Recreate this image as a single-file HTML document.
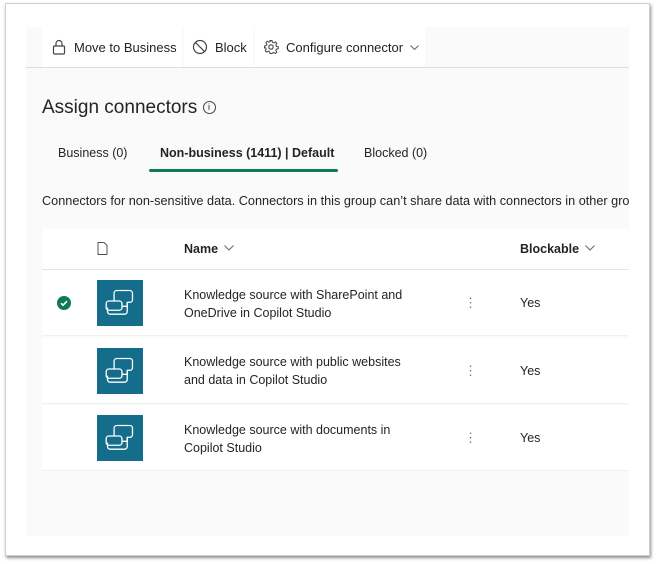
<!DOCTYPE html>
<html><head><meta charset="utf-8"><style>
*{margin:0;padding:0;box-sizing:border-box}
body{width:656px;height:564px;background:#fff;font-family:"Liberation Sans",sans-serif;color:#242424;position:relative;overflow:hidden}
.frame{position:absolute;left:5px;top:3px;width:645px;height:553px;border:1px solid #cfcfcf;box-shadow:1px 2px 3px rgba(0,0,0,.45);background:#fff}
.panel{position:absolute;left:26px;top:27px;width:603px;height:509px;background:#fafafa;overflow:hidden}
.a{position:absolute;white-space:nowrap}
.tb{position:absolute;top:0;height:40px;background:#fff;display:flex;align-items:center;font-size:13px}
.row{position:absolute;left:16px;width:587px;height:66px;background:#fff;border-bottom:1px solid #f0f0f0}
.ic{position:absolute;width:46px;height:46px;background:#136d8b}
.t{position:absolute;font-size:12.5px;line-height:18px}
.dots{position:absolute;font-size:13px;color:#777}
.yes{position:absolute;font-size:12.5px}
.chev{display:inline-block;vertical-align:2px;margin-left:4px}
</style></head><body>
<div class="frame"></div>
<div class="panel">
 <div class="a" style="left:0;top:40px;width:603px;height:1px;background:#ddd"></div>
 <div class="tb" style="left:16px;width:140px;padding-left:10px">
  <svg width="14" height="16" viewBox="0 0 14 16" style="margin-right:8px"><rect x="1.5" y="7" width="11" height="8" rx="1" fill="none" stroke="#444" stroke-width="1.2"/><path d="M4 7V4.5a3 3 0 0 1 6 0V7" fill="none" stroke="#444" stroke-width="1.2"/></svg>Move to Business</div>
 <div class="tb" style="left:158px;width:69px;padding-left:8px">
  <svg width="16" height="16" viewBox="0 0 16 16" style="margin-right:7px"><circle cx="8" cy="8" r="6.5" fill="none" stroke="#444" stroke-width="1.2"/><path d="M3.4 3.4l9.2 9.2" stroke="#444" stroke-width="1.2"/></svg>Block</div>
 <div class="tb" style="left:229px;width:170px;padding-left:8px">
  <svg width="16" height="16" viewBox="0 0 16 16" style="margin-right:7px"><circle cx="8" cy="8" r="2.2" fill="none" stroke="#444" stroke-width="1.1"/><path d="M7 1.5h2l.4 1.8 1.4.6 1.6-1 1.4 1.4-1 1.6.6 1.4 1.8.4v2l-1.8.4-.6 1.4 1 1.6-1.4 1.4-1.6-1-1.4.6L9 14.5H7l-.4-1.8-1.4-.6-1.6 1-1.4-1.4 1-1.6-.6-1.4L1.5 9V7l1.8-.4.6-1.4-1-1.6 1.4-1.4 1.6 1 1.4-.6z" fill="none" stroke="#444" stroke-width="1"/></svg>Configure connector<svg class="chev" style="margin-left:7px;vertical-align:1px" width="9" height="5" viewBox="0 0 9 5"><path d="M.5.5l4 4 4-4" fill="none" stroke="#666"/></svg></div>
 <div class="a" style="left:16px;top:70px;font-size:19px;color:#242424">Assign connectors <span style="display:inline-block;width:13px;height:13px;border:1px solid #444;border-radius:50%;font-size:9px;text-align:center;line-height:11px;vertical-align:3px">i</span></div>
 <div class="a" style="left:32px;top:119px;font-size:12.5px">Business (0)</div>
 <div class="a" style="left:134px;top:119px;font-size:12.5px;font-weight:bold">Non-business (1411) | Default</div>
 <div class="a" style="left:123px;top:142px;width:189px;height:3px;background:#0e7a5a;border-radius:2px"></div>
 <div class="a" style="left:338px;top:119px;font-size:12.5px">Blocked (0)</div>
 <div class="a" style="left:16px;top:167px;font-size:12.7px">Connectors for non-sensitive data. Connectors in this group can’t share data with connectors in other groups.</div>
 <div class="a" style="left:16px;top:202px;width:587px;height:41px;background:#fff;border-bottom:1px solid #e4e4e4"></div>
 <svg class="a" style="left:71px;top:215px" width="11" height="13" viewBox="0 0 11 13"><path d="M1 .5h6l3 3v9H1z" fill="none" stroke="#555"/></svg>
 <div class="a" style="left:158px;top:215px;font-size:12.5px;font-weight:bold">Name<svg class="chev" style="margin-left:6px" width="10" height="6" viewBox="0 0 10 6"><path d="M.5.5l4.5 4.5 4.5-4.5" fill="none" stroke="#666"/></svg></div>
 <div class="a" style="left:494px;top:215px;font-size:12.5px;font-weight:bold">Blockable<svg class="chev" style="margin-left:6px" width="10" height="6" viewBox="0 0 10 6"><path d="M.5.5l4.5 4.5 4.5-4.5" fill="none" stroke="#666"/></svg></div>

 <div class="row" style="top:243px">
  <div class="a" style="left:15px;top:26px;width:14px;height:14px;border-radius:50%;background:#0e7a5a"><svg width="14" height="14" viewBox="0 0 14 14"><path d="M4 7.2l2 2 4-4" fill="none" stroke="#fff" stroke-width="1.6"/></svg></div>
 </div>
 <div class="row" style="top:311px"></div>
 <div class="row" style="top:378px"></div>
</div>
<div class="a" style="left:0;top:0">
 <div class="ic" style="left:97px;top:280px"><svg width="46" height="46" viewBox="6 5 35 35"><g fill="none" stroke="#fff" stroke-width="1" stroke-linejoin="round"><path d="M19 15a2 2 0 0 1 2-2h10a2 2 0 0 1 2 2v5a2 2 0 0 1-2 2h-2v7a2 2 0 0 1-2 2h-11a2 2 0 0 1-2-2v-3"/><path d="M13 23a2 2 0 0 1 2-2h8a2 2 0 0 1 2 2v3a2 2 0 0 1-2 2h-8a2 2 0 0 1-2-2z"/><path d="M19 15v6M25 25h4M29 22v3"/></g></svg></div>
 <div class="ic" style="left:97px;top:348px"><svg width="46" height="46" viewBox="6 5 35 35"><g fill="none" stroke="#fff" stroke-width="1" stroke-linejoin="round"><path d="M19 15a2 2 0 0 1 2-2h10a2 2 0 0 1 2 2v5a2 2 0 0 1-2 2h-2v7a2 2 0 0 1-2 2h-11a2 2 0 0 1-2-2v-3"/><path d="M13 23a2 2 0 0 1 2-2h8a2 2 0 0 1 2 2v3a2 2 0 0 1-2 2h-8a2 2 0 0 1-2-2z"/><path d="M19 15v6M25 25h4M29 22v3"/></g></svg></div>
 <div class="ic" style="left:97px;top:415px"><svg width="46" height="46" viewBox="6 5 35 35"><g fill="none" stroke="#fff" stroke-width="1" stroke-linejoin="round"><path d="M19 15a2 2 0 0 1 2-2h10a2 2 0 0 1 2 2v5a2 2 0 0 1-2 2h-2v7a2 2 0 0 1-2 2h-11a2 2 0 0 1-2-2v-3"/><path d="M13 23a2 2 0 0 1 2-2h8a2 2 0 0 1 2 2v3a2 2 0 0 1-2 2h-8a2 2 0 0 1-2-2z"/><path d="M19 15v6M25 25h4M29 22v3"/></g></svg></div>
 <div class="t" style="left:184px;top:286px">Knowledge source with SharePoint and<br>OneDrive in Copilot Studio</div>
 <div class="t" style="left:184px;top:353px">Knowledge source with public websites<br>and data in Copilot Studio</div>
 <div class="t" style="left:184px;top:421px">Knowledge source with documents in<br>Copilot Studio</div>
 <div class="dots" style="left:464px;top:295px">&#8942;</div>
 <div class="dots" style="left:464px;top:363px">&#8942;</div>
 <div class="dots" style="left:464px;top:430px">&#8942;</div>
 <div class="yes" style="left:520px;top:296px">Yes</div>
 <div class="yes" style="left:520px;top:364px">Yes</div>
 <div class="yes" style="left:520px;top:431px">Yes</div>
</div>
</body></html>
